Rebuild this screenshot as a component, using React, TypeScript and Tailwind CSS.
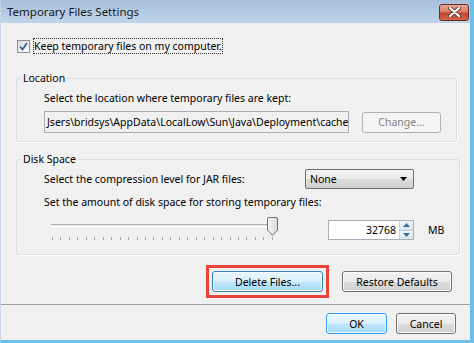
import React from "react";

const font = "font-['Noto_Sans','Open_Sans',sans-serif] text-[10.5px] leading-[16px] text-black";

const btn =
  "h-[21px] rounded-[3px] border border-[#707070] bg-[linear-gradient(#f2f2f2_0%,#ebebeb_50%,#dddddd_51%,#cfcfcf_100%)] shadow-[inset_0_0_0_1px_#fcfcfc] flex items-center justify-center";

const blueBtn =
  "h-[21px] rounded-[3px] border border-[#3c7fb1] bg-[linear-gradient(#eaf6fd_0%,#d9f0fc_50%,#bee6fd_51%,#a7d9f5_100%)] shadow-[inset_0_0_0_1px_#f5fbff] flex items-center justify-center";

function Thumb() {
  return (
    <svg width="11" height="19" viewBox="0 0 11 19" className="block">
      <defs>
        <linearGradient id="tg" x1="0" x2="1" y1="0" y2="0">
          <stop offset="0" stopColor="#f4f4f4" />
          <stop offset="1" stopColor="#dcdcdc" />
        </linearGradient>
      </defs>
      <path d="M0.5 2 Q0.5 0.5 2 0.5 H9 Q10.5 0.5 10.5 2 V13 L5.5 18.5 L0.5 13 Z" fill="url(#tg)" stroke="#707070" />
    </svg>
  );
}

function Tri({ up }: { up?: boolean }) {
  return (
    <svg width="7" height="4" viewBox="0 0 7 4" className="block">
      <path d={up ? "M0 4 L3.5 0 L7 4 Z" : "M0 0 L7 0 L3.5 4 Z"} fill="#3d6b9e" />
    </svg>
  );
}

export default function App() {
  const ticks = Array.from({ length: 27 }, (_, i) => i);
  return (
    <div className={`w-[474px] h-[343px] flex flex-col bg-[#f0f0f0] border-r-[4px] border-b-[3px] border-l border-l-[#c7d6e6] border-r-[#6cbfe9] border-b-[#6cbfe9] overflow-hidden ${font}`}>
      {/* title bar */}
      <div className="h-[23px] shrink-0 flex items-center justify-between bg-[linear-gradient(#a6bfdb,#c0d5eb)] pl-[6px] pr-[1px]">
        <span className="text-[11.5px] text-[#1a1a1a]">Temporary Files Settings</span>
        <div className="w-[30px] h-[17px] mt-[1px] rounded-[3px] border border-[#6b2c22] bg-[linear-gradient(#e8a795_0%,#d77a62_45%,#c2452c_55%,#d0674b_100%)] flex items-center justify-center">
          <svg width="13" height="10" viewBox="0 0 13 10">
            <path d="M2 1 L11 9 M11 1 L2 9" stroke="#5a3a35" strokeWidth="4" strokeLinecap="round" />
            <path d="M2 1 L11 9 M11 1 L2 9" stroke="#ffffff" strokeWidth="2.2" strokeLinecap="round" />
          </svg>
        </div>
      </div>

      <div className="flex-1 flex flex-col">
        {/* checkbox */}
        <div className="mt-[15px] ml-[16px] flex items-center h-[16px]">
          <div className="w-[13px] h-[13px] border border-[#8f8f8f] bg-[linear-gradient(135deg,#dcdcdc,#fefefe)] p-[1px] flex items-center justify-center">
            <svg width="9" height="9" viewBox="0 0 9 9">
              <path d="M1 4.5 L3.5 7.5 L8 1" stroke="#3c5f9e" strokeWidth="1.8" fill="none" />
            </svg>
          </div>
          <span className="ml-[3px] px-[1px] outline outline-1 outline-dotted outline-[#333] -outline-offset-1">
            Keep temporary files on my computer.
          </span>
        </div>

        {/* Location */}
        <fieldset className="mt-[16px] ml-[15px] mr-[13px] border border-[#d5dfe5] rounded-[3px] shadow-[1px_1px_0_#ffffff]">
          <legend className="ml-[4px] px-[2px]">Location</legend>
          <div className="pl-[27px] pr-[15px] pt-[4px] pb-[8px]">
            <div>Select the location where temporary files are kept:</div>
            <div className="mt-[5px] flex items-center">
              <div className="w-[305px] h-[22px] border border-[#abadb3] bg-[#f0f0f0] pl-[2px] flex items-center overflow-hidden whitespace-nowrap">
                Jsers\bridsys\AppData\LocalLow\Sun\Java\Deployment\cache
              </div>
              <div className="ml-[13px] w-[79px] h-[21px] rounded-[3px] border border-[#adb2b5] bg-[#f4f4f4] text-[#838383] flex items-center justify-center">
                Change...
              </div>
            </div>
          </div>
        </fieldset>

        {/* Disk Space */}
        <fieldset className="mt-[9px] ml-[15px] mr-[13px] border border-[#d5dfe5] rounded-[3px] shadow-[1px_1px_0_#ffffff]">
          <legend className="ml-[4px] px-[2px]">Disk Space</legend>
          <div className="pl-[27px] pr-[15px] pt-[1px] pb-[13px]">
            <div className="flex items-center h-[21px]">
              <div className="w-[261px]">Select the compression level for JAR files:</div>
              <div className="w-[109px] h-[20px] rounded-[2px] border border-[#707070] bg-[linear-gradient(#f2f2f2_0%,#ebebeb_50%,#dddddd_51%,#cfcfcf_100%)] flex items-center justify-between pl-[4px] pr-[6px]">
                <span>None</span>
                <svg width="7" height="4" viewBox="0 0 7 4">
                  <path d="M0 0 L7 0 L3.5 4 Z" fill="#000" />
                </svg>
              </div>
            </div>
            <div className="mt-[5px]">Set the amount of disk space for storing temporary files:</div>
            <div className="mt-[6px] flex items-start h-[25px]">
              {/* slider */}
              <div className="relative ml-[7px] w-[227px] h-[25px]">
                <div className="absolute left-0 right-[4px] top-[8px] h-[3px] border-t border-[#b0b0b0] border-b border-b-white bg-[#e6e6e6]" />
                <div className="absolute left-[1px] right-[5px] top-[21px] flex justify-between">
                  {ticks.map((t) => (
                    <div key={t} className="w-px h-[3px] bg-[#a5a5a5]" />
                  ))}
                </div>
                <div className="absolute right-0 top-[1px]">
                  <Thumb />
                </div>
              </div>
              <div className="ml-[50px] mt-[4px] flex h-[20px] border border-[#abadb3] bg-white">
                <div className="w-[70px] text-right pr-[3px] flex items-center justify-end">32768</div>
                <div className="w-[14px] flex flex-col border-l border-[#c8d4e2]">
                  <div className="flex-1 flex items-center justify-center bg-[linear-gradient(#f3f7fb,#d9e4ef)] border-b border-[#b9c8d8]">
                    <Tri up />
                  </div>
                  <div className="flex-1 flex items-center justify-center bg-[linear-gradient(#f3f7fb,#d9e4ef)]">
                    <Tri />
                  </div>
                </div>
              </div>
              <div className="ml-[14px] mt-[6px]">MB</div>
            </div>
          </div>
        </fieldset>

        {/* Delete / Restore */}
        <div className="mt-[10px] flex justify-end items-center pr-[18px]">
          <div className="border-[3px] border-[#e8443a] p-[3px]">
            <div className={`${blueBtn} w-[111px] h-[20px]`}>Delete Files...</div>
          </div>
          <div className={`${btn} ml-[13px] w-[110px] h-[20px]`}>Restore Defaults</div>
        </div>

        <div className="mt-[6px] h-px bg-[#a0a0a0]" />

        <div className="mt-[8px] flex justify-end pr-[14px]">
          <div className={`${blueBtn} w-[61px] border-[#3399ff]`}>OK</div>
          <div className={`${btn} ml-[9px] w-[60px]`}>Cancel</div>
        </div>
      </div>
    </div>
  );
}
